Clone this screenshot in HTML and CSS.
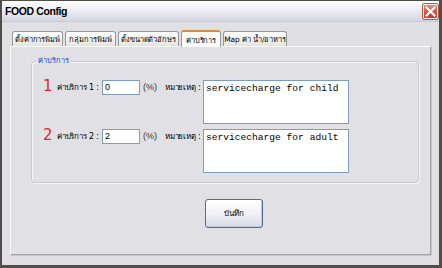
FILE: index.html
```html
<!DOCTYPE html>
<html>
<head>
<meta charset="utf-8">
<link rel="stylesheet" href="styles.css">
</head>
<body>
<div class="window">
  <div class="titlebar">
    <span class="title">FOOD Config</span>
    <span class="close"><svg width="11" height="11" viewBox="0 0 11 11"><path d="M1.5 1.5 L9.5 9.5 M9.5 1.5 L1.5 9.5" stroke="#fff" stroke-width="2" stroke-linecap="square"/></svg></span>
  </div>
  <div class="body">
    <div class="tabs">
      <div class="tab t1">ตั้งค่าการพิมพ์</div>
      <div class="tab t2">กลุ่มการพิมพ์</div>
      <div class="tab t3">ตั้งขนาดตัวอักษร</div>
      <div class="tab t4 active">ค่าบริการ</div>
      <div class="tab t5">Map ค่า น้ำ/อาหาร</div>
    </div>
    <div class="panel">
      <div class="group">
        <div class="legend">ค่าบริการ</div>
        <div class="row">
          <span class="num">1</span>
          <span class="lbl">ค่าบริการ 1 :</span>
          <span class="input">0</span>
          <span class="pct">(%)</span>
          <span class="note">หมายเหตุ :</span>
          <span class="area">servicecharge for child</span>
        </div>
        <div class="row">
          <span class="num">2</span>
          <span class="lbl">ค่าบริการ 2 :</span>
          <span class="input">2</span>
          <span class="pct">(%)</span>
          <span class="note">หมายเหตุ :</span>
          <span class="area">servicecharge for adult</span>
        </div>
      </div>
      <div class="btnrow">
        <div class="button">บันทึก</div>
      </div>
    </div>
  </div>
</div>
</body>
</html>
```
FILE: styles.css
```css
* { box-sizing: border-box; }
html, body { margin: 0; padding: 0; }
body {
  width: 442px;
  height: 268px;
  overflow: hidden;
  font-family: Tahoma, "DejaVu Sans", "Noto Sans", sans-serif;
  font-size: 8px;
  color: #000;
  background: #e0dfe3;
}
.window {
  width: 442px;
  height: 268px;
  display: flex;
  flex-direction: column;
  border-style: solid;
  border-color: #4f4f48;
  border-width: 1px 3px 3px 2px;
  background: #e0dfe3;
}
.titlebar {
  height: 21px;
  flex: none;
  display: flex;
  align-items: center;
  justify-content: space-between;
  padding: 0 1px 0 3px;
  background: linear-gradient(#fdfdfe, #eeeef4 45%, #d4d5e1);
  border-bottom: 1px solid #c9c9d2;
}
.title {
  font-family: "Liberation Sans", Arial, sans-serif;
  font-weight: bold;
  font-size: 10.5px;
  letter-spacing: -0.4px;
}
.close {
  width: 15px;
  height: 15px;
  display: flex;
  align-items: center;
  justify-content: center;
  border: 1px solid #f3f0f0;
  border-radius: 2px;
  background: linear-gradient(#e98a78, #d75a45 50%, #c43a26);
  box-shadow: 0 0 0 1px #a85a50;
}
.body {
  flex: 1;
  padding: 7px 0 0 8px;
  display: flex;
  flex-direction: column;
}
.tabs {
  display: flex;
  align-items: flex-end;
  gap: 2px;
  padding-left: 2px;
  height: 17px;
  position: relative;
  z-index: 1;
}
.tab {
  height: 15px;
  border: 1px solid #919b9c;
  border-bottom: none;
  border-radius: 3px 3px 0 0;
  background: linear-gradient(#ffffff, #f1f0ec 60%, #e4e3dd);
  display: flex;
  align-items: center;
  justify-content: center;
  font-size: 7.5px;
  letter-spacing: -0.1px;
  white-space: nowrap;
  overflow: hidden;
}
.t1 { width: 51px; }
.t2 { width: 51px; }
.t3 { width: 61px; }
.t4 { width: 40px; }
.t5 { width: 64px; }
.tab.active {
  height: 17px;
  margin-bottom: -1px;
  border-top: 2px solid #e68b2c;
  background: #fbfbfc;
}
.panel {
  width: 421px;
  height: 209px;
  border-style: solid;
  border-width: 1px;
  border-color: #fbfbfb #a3a3a8 #a3a3a8 #fbfbfb;
  box-shadow: 1px 1px 0 #c6c6c8;
  background: #e1e0e4;
  padding: 14px 11px 0 20px;
  display: flex;
  flex-direction: column;
}
.group {
  height: 122px;
  border: 1px solid #c8c8c9;
  border-radius: 4px;
  box-shadow: inset 1px 1px 0 #f6f6f7, 1px 1px 0 #f6f6f7;
  position: relative;
  padding: 18px 0 0 11px;
  display: flex;
  flex-direction: column;
  gap: 5px;
}
.legend {
  position: absolute;
  top: -7px;
  left: 4px;
  padding: 0 2px;
  background: #e1e0e4;
  color: #1d4ecf;
  font-size: 7.5px;
  line-height: 12px;
}
.row {
  display: flex;
  align-items: flex-start;
}
.num {
  width: 14px;
  color: #e0282a;
  font-family: "DejaVu Sans", sans-serif;
  font-size: 15px;
  line-height: 14px;
  margin-top: -1px;
}
.lbl {
  width: 45px;
  line-height: 15px;
  font-size: 8px;
  letter-spacing: -0.2px;
  white-space: nowrap;
}
.input {
  width: 38px;
  height: 15px;
  background: #fff;
  border: 1px solid #7f9db9;
  font-size: 9px;
  line-height: 13px;
  padding-left: 2px;
  font-family: "Liberation Sans", Arial, sans-serif;
}
.pct {
  width: 25px;
  padding-left: 3px;
  line-height: 14px;
  font-size: 9px;
  font-family: "Liberation Sans", Arial, sans-serif;
  color: #333;
}
.note {
  width: 38px;
  line-height: 15px;
  font-size: 8px;
  letter-spacing: -0.2px;
  white-space: nowrap;
}
.area {
  width: 146px;
  height: 44px;
  background: #fff;
  border: 1px solid #7f9db9;
  font-family: "Liberation Mono", monospace;
  font-size: 9.6px;
  line-height: 14px;
  padding: 1px 0 0 2px;
  white-space: nowrap;
}
.btnrow {
  display: flex;
  padding: 16px 0 0 174px;
}
.button {
  width: 58px;
  height: 29px;
  border: 1px solid #4e6d99;
  border-radius: 3px;
  background: linear-gradient(#ffffff, #f1f1f6 50%, #d9d9e4);
  box-shadow: inset -1px -1px 0 #c3c8dc;
  display: flex;
  align-items: center;
  justify-content: center;
  font-size: 8px;
}
```
